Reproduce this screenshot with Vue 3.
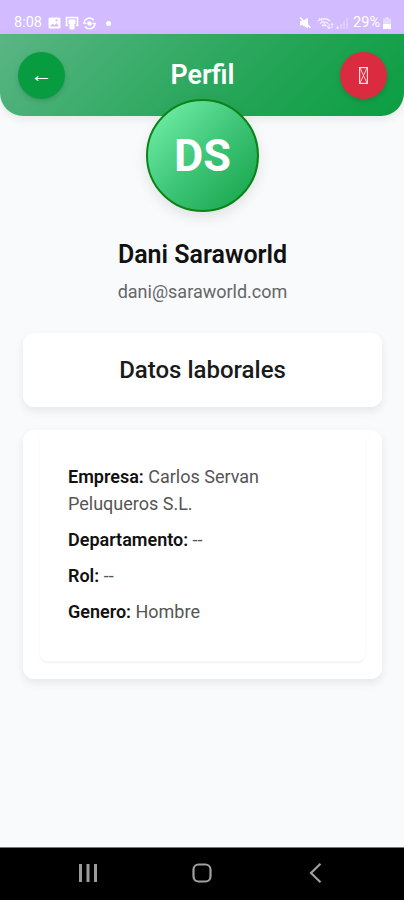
<template>
  <div class="screen">
    <div class="status-bar">
      <div class="status-left">
        <span>8:08</span>
        <svg width="13" height="12" viewBox="0 0 13 12">
          <rect x="0.5" y="0.5" width="12" height="11" rx="1.5" fill="#fff" />
          <path d="M2 9.5l2.5-3 2 1.8 2-2.3 2.5 3.5z" fill="#d2bbff" />
          <circle cx="8.5" cy="3.4" r="1.1" fill="#d2bbff" />
        </svg>
        <svg width="14" height="14" viewBox="0 0 14 14">
          <path d="M0.5 9.5H3M1.5 9V1.5h11V9M11 9.5h2.5" fill="none" stroke="#fff" stroke-width="1.6" />
          <path d="M3.5 3.5h7V8H9.5v5.5h-5V8h-1z" fill="#fff" />
        </svg>
        <svg width="13" height="13" viewBox="0 0 13 13">
          <path d="M10.8 3.3A5.3 5.3 0 0 0 1.2 6.5M2 9.3A5.3 5.3 0 0 0 11.8 6.5" fill="none" stroke="#fff" stroke-width="1.5" />
          <path d="M0 6.2h3.5M9.5 6.5H13" stroke="#fff" stroke-width="1.3" />
          <circle cx="6.5" cy="6.5" r="2.3" fill="#fff" />
        </svg>
        <i class="dot"></i>
      </div>
      <div class="status-right">
        <svg width="12" height="12" viewBox="0 0 12 12">
          <path d="M1 4h2.5L9 0.8v10.4L3.5 8.2H1z" fill="#fff" />
          <path d="M1 0.5l10.5 10.5" stroke="#fff" stroke-width="1.6" />
        </svg>
        <svg class="wifi" width="17" height="13" viewBox="0 0 17 13">
          <path d="M0.8 4a9.5 9.5 0 0 1 12.4 0M3 6.5a6 6 0 0 1 8 0M5 9a3 3 0 0 1 4 0" fill="none" stroke="#fff" stroke-width="1.5" />
          <path d="M2 1l10 10M12 6.5v5M10.5 10l1.5 2 1.5-2M15 11.5v-5M13.8 8L15 6.5 16.2 8" fill="none" stroke="#fff" stroke-width="1" />
        </svg>
        <svg class="signal" width="12" height="12" viewBox="0 0 12 12">
          <path d="M1.5 9.5V12" stroke="#fff" stroke-opacity="0.9" stroke-width="1.6" />
          <path d="M5 7v5M8 4v8M11 1v11" stroke="#fff" stroke-opacity="0.3" stroke-width="1.8" />
        </svg>
        <span>29%</span>
        <svg class="battery" width="8" height="12" viewBox="0 0 8 12">
          <path d="M2.5 0h3v1.5H8V12H0V1.5h2.5z" fill="#fff" fill-opacity="0.45" />
          <path d="M0 7h8v5H0z" fill="#fff" />
        </svg>
      </div>
    </div>

    <header class="header">
      <button class="btn btn-back" @click="goBack">←</button>
      <h1 class="title">Perfil</h1>
      <button class="btn btn-logout" @click="logout">
        <svg width="9" height="17" viewBox="0 0 9 17" fill="none" stroke="#ffdfe2">
          <rect x="0.6" y="0.6" width="7.8" height="15.8" stroke-width="1.2" />
          <path d="M1 1l7 15M8 1L1 16" stroke-width="0.9" />
        </svg>
      </button>
    </header>

    <main class="content">
      <div class="avatar">{{ initials }}</div>
      <h2 class="name">{{ user.name }}</h2>
      <p class="email">{{ user.email }}</p>

      <section class="card card-title">Datos laborales</section>

      <section class="card card-data">
        <div class="inner">
          <p v-for="item in datos" :key="item.label" class="row">
            <strong>{{ item.label }}:</strong> {{ item.value }}
          </p>
        </div>
      </section>
    </main>

    <nav class="nav-bar">
      <svg width="20" height="20" viewBox="0 0 20 20">
        <path d="M2.5 1v18M10 1v18M17.5 1v18" stroke="#9b9b9b" stroke-width="3" />
      </svg>
      <svg width="20" height="20" viewBox="0 0 20 20">
        <rect x="1.5" y="1.5" width="17" height="17" rx="5" fill="none" stroke="#a0a0a0" stroke-width="2.2" />
      </svg>
      <svg width="20" height="20" viewBox="0 0 20 20">
        <path d="M14.5 0.8L5 10l9.5 9.2" fill="none" stroke="#a0a0a0" stroke-width="2.2" />
      </svg>
    </nav>
  </div>
</template>

<script setup>
import { ref, computed } from 'vue'

const emits = defineEmits(['back', 'logout'])

const user = ref({
  name: 'Dani Saraworld',
  email: 'dani@saraworld.com'
})

const datos = ref([
  { label: 'Empresa', value: 'Carlos Servan Peluqueros S.L.' },
  { label: 'Departamento', value: '--' },
  { label: 'Rol', value: '--' },
  { label: 'Genero', value: 'Hombre' }
])

const initials = computed(() => user.value.name.split(' ').map(p => p[0]).join(''))

const goBack = () => emits('back')
const logout = () => emits('logout')
</script>

<style>
body {
  margin: 0;
  background: #f8fafc;
}
</style>

<style scoped>
.screen {
  height: 900px;
  display: flex;
  flex-direction: column;
  overflow: hidden;
  background: #f8fafc;
  font-family: Roboto, "Liberation Sans", sans-serif;
}

/* barra de estado */
.status-bar {
  height: 34px;
  flex: none;
  box-sizing: border-box;
  padding: 13px 13px 0 14px;
  display: flex;
  justify-content: space-between;
  background: #d2bbff;
  color: #fff;
  font-size: 14.5px;
  line-height: 20px;
}

.status-left,
.status-right {
  display: flex;
  align-items: center;
  height: 20px;
}

.status-left {
  gap: 4px;
}

.status-left span {
  width: 30px;
}

.dot {
  width: 5px;
  height: 5px;
  margin-left: 6px;
  border-radius: 50%;
  background: #fff;
}

.wifi {
  margin-left: 6px;
  opacity: 0.75;
}

.signal {
  margin: 0 5px 0 2px;
}

.battery {
  margin-left: 3px;
}

/* cabecera */
.header {
  height: 82px;
  flex: none;
  box-sizing: border-box;
  padding: 0 17px 0 18px;
  display: flex;
  align-items: center;
  justify-content: space-between;
  background: linear-gradient(135deg, #5bb585 0%, #36ab67 40%, #22a455 65%, #0b9e41 100%);
  border-radius: 0 0 23px 23px;
  box-shadow: 0 3px 10px rgba(0, 0, 0, 0.08);
}

.title {
  margin: 0;
  color: #fff;
  font-size: 26.8px;
  font-weight: 600;
}

.btn {
  width: 47px;
  height: 47px;
  padding: 0;
  border: none;
  border-radius: 50%;
  display: flex;
  align-items: center;
  justify-content: center;
  color: #fff;
  box-shadow: 0 2px 5px rgba(0, 0, 0, 0.15);
  cursor: pointer;
}

.btn-back {
  background: #079c3f;
  font-family: "Liberation Sans", sans-serif;
  font-size: 22px;
}

.btn-logout {
  background: #db2b40;
}

/* perfil */
.content {
  flex: 1;
  padding: 0 22px 0 23px;
  display: flex;
  flex-direction: column;
  align-items: center;
}

.avatar {
  width: 113px;
  height: 113px;
  flex: none;
  box-sizing: border-box;
  margin-top: -17px;
  border: 2px solid #0b8316;
  border-radius: 50%;
  display: flex;
  align-items: center;
  justify-content: center;
  background: linear-gradient(135deg, #72efa8 5%, #3fc679 50%, #18a54b 95%);
  color: #fff;
  font-size: 45px;
  font-weight: 700;
  box-shadow: 0 5px 14px rgba(0, 0, 0, 0.1);
  z-index: 1;
}

.name {
  margin: 26px 0 0;
  color: #111;
  font-size: 25px;
  line-height: 34px;
  font-weight: 600;
}

.email {
  margin: 7px 0 0;
  color: #666;
  font-size: 18px;
  line-height: 26px;
}

.card {
  width: 100%;
  box-sizing: border-box;
  border-radius: 11px;
  background: #fff;
  box-shadow: 0 4px 8px rgba(0, 0, 0, 0.08);
}

.card-title {
  height: 74px;
  margin-top: 28px;
  display: flex;
  align-items: center;
  justify-content: center;
  color: #1a1a1a;
  font-size: 24px;
  font-weight: 500;
}

.card-data {
  height: 249px;
  margin-top: 23px;
  padding: 0 17px 18px;
}

.inner {
  height: 231px;
  box-sizing: border-box;
  padding: 33px 28px 0;
  border-radius: 8px;
  box-shadow: 0 2px 3px rgba(0, 0, 0, 0.05);
}

.row {
  margin: 0 0 9px;
  color: #555;
  font-size: 18px;
  line-height: 27px;
}

.row strong {
  color: #111;
  font-weight: 600;
}

/* navegación */
.nav-bar {
  height: 53px;
  flex: none;
  box-sizing: border-box;
  padding: 0 78px 2px;
  border-top: 1px solid #777;
  display: flex;
  align-items: center;
  justify-content: space-between;
  background: #000;
}
</style>
